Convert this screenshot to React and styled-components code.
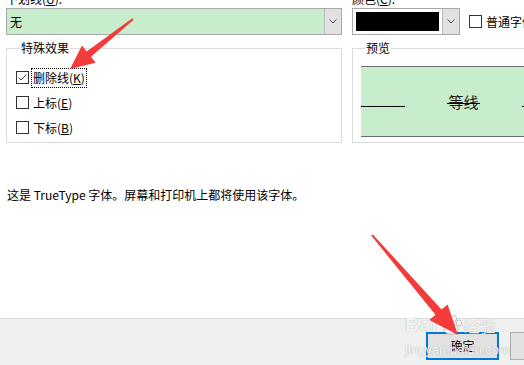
import React from "react";
import styled, { createGlobalStyle } from "styled-components";

const GlobalStyle = createGlobalStyle`
  html, body {
    margin: 0;
    padding: 0;
    background: #fff;
  }
  body {
    font-family: "Noto Sans CJK SC", "Noto Sans", sans-serif;
    font-size: 12px;
    color: #000;
    overflow: hidden;
  }
`;

const Page = styled.div`
  position: relative;
  width: 524px;
  height: 365px;
  overflow: hidden;
  background: #fff;
`;

const Dialog = styled.div`
  width: 590px;
  height: 365px;
  display: flex;
  flex-direction: column;
`;

const Body = styled.div`
  height: 318px;
  flex: none;
  padding-left: 6px;
  box-sizing: border-box;
`;

const TopRow = styled.div`
  display: grid;
  grid-template-columns: 336px auto;
  column-gap: 10px;
  margin-top: -8px;
`;

const Field = styled.div`
  display: flex;
  flex-direction: column;
`;

const FieldLabel = styled.div`
  height: 14px;
  line-height: 14px;
  margin-bottom: 2px;
  white-space: nowrap;
`;

const FieldRow = styled.div`
  display: flex;
  align-items: center;
`;

const Combo = styled.div`
  width: ${p => p.$width}px;
  height: 27px;
  box-sizing: border-box;
  border: 1px solid #a9a9a9;
  background: ${p => p.$fill || "#fff"};
  display: flex;
`;

const ComboValue = styled.div`
  flex: 1;
  display: flex;
  align-items: center;
  padding-left: 3px;
  line-height: 14px;
`;

const Swatch = styled.div`
  flex: 1;
  margin: 3px;
  background: #000;
`;

const DropButton = styled.div`
  width: 16px;
  background: #e1e1e1;
  border-left: 1px solid #b9b9b9;
  display: flex;
  align-items: center;
  justify-content: center;
`;

const Chevron = () => (
  <svg width="8" height="5" viewBox="0 0 8 5">
    <path d="M0.5 0.5 L4 4 L7.5 0.5" fill="none" stroke="#555" strokeWidth="1" />
  </svg>
);

const Box = styled.span`
  width: 13px;
  height: 13px;
  box-sizing: border-box;
  border: 1px solid #333;
  background: #fff;
  display: inline-flex;
  align-items: center;
  justify-content: center;
  flex: none;
`;

const CheckBox = ({ checked }) => (
  <Box>
    {checked && (
      <svg width="11" height="11" viewBox="0 0 11 11">
        <path d="M1.5 5.5 L4 8 L9.5 2.5" fill="none" stroke="#444" strokeWidth="1" />
      </svg>
    )}
  </Box>
);

const CheckRow = styled.div`
  display: flex;
  align-items: center;
  height: ${p => p.$height || 25}px;
  gap: ${p => p.$gap || 2}px;
  margin-left: ${p => p.$offset || 0}px;
  white-space: nowrap;
`;

const CheckLabel = styled.span`
  line-height: 18px;
  padding: 0 1px;
  border: 1px ${p => (p.$focus ? "dotted #000" : "solid transparent")};
`;

const Key = styled.span`
  text-decoration: underline;
  text-underline-offset: 1px;
`;

const GroupsRow = styled.div`
  display: grid;
  grid-template-columns: 336px 224px;
  column-gap: 10px;
  margin-top: 6px;
`;

const Group = styled.fieldset`
  margin: 0;
  min-width: 0;
  border: 1px solid #dcdcdc;
  padding: ${p => p.$padding};
`;

const Legend = styled.legend`
  margin-left: 4px;
  padding: 0 1px;
  line-height: 14px;
`;

const PreviewBox = styled.div`
  width: 206px;
  height: 71px;
  box-sizing: border-box;
  border: 1px solid #6d6d6d;
  border-left-width: 0;
  background: #c7edcc;
  display: flex;
  align-items: center;
`;

const Rule = styled.div`
  width: 44px;
  height: 1px;
  background: #000;
  margin-top: 9px;
  flex: none;
`;

const PreviewText = styled.div`
  flex: 1;
  display: flex;
  justify-content: center;
`;

const Struck = styled.span`
  display: inline-block;
  font-size: 15px;
  line-height: 18px;
  color: #1a1a1a;
  padding: 0 1px;
  background: linear-gradient(#000, #000) no-repeat 0 10px / 100% 1px;
`;

const Note = styled.div`
  margin-top: 45px;
  margin-left: 1px;
  line-height: 14px;
`;

const Footer = styled.div`
  flex: 1;
  background: #f0f0f0;
  border-top: 1px solid #dcdcdc;
  display: flex;
  justify-content: flex-end;
  align-items: flex-start;
  gap: 11px;
  padding: 13px 7px 0 0;
`;

const Button = styled.div`
  width: 73px;
  height: 28px;
  box-sizing: border-box;
  background: #e1e1e1;
  border: ${p => (p.$default ? "2px solid #0078d7" : "1px solid #adadad")};
  display: flex;
  align-items: center;
  justify-content: center;
  line-height: 14px;
`;

const Overlay = styled.svg`
  position: absolute;
  left: 0;
  top: 0;
  pointer-events: none;
`;

const Watermark = styled.div`
  position: absolute;
  left: 405px;
  top: 314px;
  color: rgba(255, 255, 255, 0.9);
  text-shadow: 0 0 1px rgba(120, 120, 120, 0.7);
  pointer-events: none;
`;

const MarkTitle = styled.div`
  display: flex;
  align-items: center;
  font-family: "Liberation Sans", sans-serif;
  font-weight: bold;
  font-size: 19px;
  line-height: 22px;
  letter-spacing: 1px;
`;

const MarkCjk = styled.span`
  font-family: "Noto Sans CJK SC", sans-serif;
  font-weight: normal;
  font-size: 16px;
  letter-spacing: 0;
`;

const MarkUrl = styled.div`
  font-family: "Liberation Sans", sans-serif;
  font-size: 13px;
  line-height: 15px;
  margin-top: 6px;
`;

const Paw = () => (
  <svg width="26" height="22" viewBox="0 0 26 22">
    <g fill="rgba(255,255,255,0.85)" stroke="rgba(150,150,150,0.7)" strokeWidth="0.8">
      <ellipse cx="13" cy="15" rx="7" ry="5.5" />
      <ellipse cx="5" cy="9" rx="2.5" ry="3" />
      <ellipse cx="10" cy="4.5" rx="2.5" ry="3" />
      <ellipse cx="16" cy="4.5" rx="2.5" ry="3" />
      <ellipse cx="21" cy="9" rx="2.5" ry="3" />
    </g>
  </svg>
);

export default function App() {
  return (
    <Page>
      <GlobalStyle />
      <Dialog>
        <Body>
          <TopRow>
            <Field>
              <FieldLabel>
                下划线(<Key>U</Key>):
              </FieldLabel>
              <Combo $width={336} $fill="#c7edcc">
                <ComboValue>无</ComboValue>
                <DropButton>
                  <Chevron />
                </DropButton>
              </Combo>
            </Field>
            <Field>
              <FieldLabel>
                颜色(<Key>C</Key>):
              </FieldLabel>
              <FieldRow>
                <Combo $width={108}>
                  <Swatch />
                  <DropButton>
                    <Chevron />
                  </DropButton>
                </Combo>
                <CheckRow $height={27} $gap={4} $offset={9}>
                  <CheckBox />
                  <span>
                    普通字体(<Key>N</Key>)
                  </span>
                </CheckRow>
              </FieldRow>
            </Field>
          </TopRow>

          <GroupsRow>
            <Group $padding="10px 0 2px 9px">
              <Legend>特殊效果</Legend>
              <CheckRow>
                <CheckBox checked />
                <CheckLabel $focus>
                  删除线(<Key>K</Key>)
                </CheckLabel>
              </CheckRow>
              <CheckRow>
                <CheckBox />
                <CheckLabel>
                  上标(<Key>E</Key>)
                </CheckLabel>
              </CheckRow>
              <CheckRow>
                <CheckBox />
                <CheckLabel>
                  下标(<Key>B</Key>)
                </CheckLabel>
              </CheckRow>
            </Group>
            <Group $padding="11px 0 5px 8px">
              <Legend>预览</Legend>
              <PreviewBox>
                <Rule />
                <PreviewText>
                  <Struck>等线</Struck>
                </PreviewText>
                <Rule />
              </PreviewBox>
            </Group>
          </GroupsRow>

          <Note>这是 TrueType 字体。屏幕和打印机上都将使用该字体。</Note>
        </Body>
        <Footer>
          <Button $default>确定</Button>
          <Button>取消</Button>
        </Footer>
      </Dialog>

      <Watermark>
        <MarkTitle>
          Bai
          <Paw />
          <MarkCjk>经验</MarkCjk>
        </MarkTitle>
        <MarkUrl>jingyan.baidu.com</MarkUrl>
      </Watermark>

      <Overlay width="524" height="365" viewBox="0 0 524 365">
        <polygon
          fill="#f43b3b"
          points="70,69 95.6,62.7 91,56.8 133.6,19.8 132.4,18.2 86.6,51.4 82,45.5"
        />
        <polygon
          fill="#f43b3b"
          points="458,335 447.6,304.4 441.5,309.6 372.8,234.4 371.2,235.6 435.5,314.8 429.4,320"
        />
      </Overlay>
    </Page>
  );
}
